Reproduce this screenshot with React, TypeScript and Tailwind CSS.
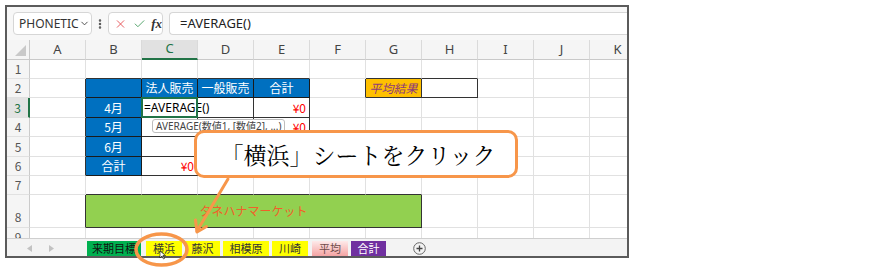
import type { ReactNode } from "react";
import { Check, ChevronDown, EllipsisVertical, X } from "lucide-react";
import { twMerge } from "tailwind-merge";

const jp = "font-['Noto_Sans_CJK_JP',sans-serif]";
const ui = "font-['Noto_Sans','Noto_Sans_CJK_JP',sans-serif]";

const blue = "justify-center bg-[#0070c0] text-white border-r-[#1b1b1b] border-b-[#1b1b1b]";
const boxed = "border-r-[#333] border-b-[#333]";
const redNum = "justify-end pr-[3px] text-[#ff0000]";

function Cell({ className, children }: { className?: string; children?: ReactNode }) {
  return (
    <div
      className={twMerge(
        "flex w-[56px] shrink-0 items-center whitespace-nowrap border-r border-b border-r-[#e1e1e1] border-b-[#e1e1e1] text-[12px] leading-none text-black",
        className
      )}
    >
      {children}
    </div>
  );
}

function RowHead({ n, active, className }: { n: number; active?: boolean; className?: string }) {
  return (
    <div
      className={twMerge(
        "flex w-[23px] shrink-0 items-center justify-center border-b border-r border-b-[#e1e1e1] border-r-[#cbcbcb] bg-[#f5f5f5] text-[12px] leading-none text-[#555]",
        active && "border-r-2 border-r-[#217346] bg-[#e3e3e3] text-[#217346]",
        className
      )}
    >
      {n}
    </div>
  );
}

function Row({ h, children }: { h: string; children: ReactNode }) {
  return <div className={twMerge("flex shrink-0", h)}>{children}</div>;
}

function Rest({ n }: { n: number }) {
  return (
    <>
      {Array.from({ length: n }, (_, i) => (
        <Cell key={i} />
      ))}
    </>
  );
}

const letters = ["A", "B", "C", "D", "E", "F", "G", "H", "I", "J", "K"];

function FormulaBar() {
  return (
    <div className={`flex h-[33px] shrink-0 items-center bg-[#f7f7f7] pl-[6px] ${ui}`}>
      <div className="flex h-[23px] w-[79px] shrink-0 items-center rounded-[4px] border border-[#d6d6d6] bg-white pl-[5px] pr-[3px] text-[12px] text-[#333]">
        PHONETIC
        <ChevronDown size={11} strokeWidth={2} className="ml-auto shrink-0 text-[#444]" />
      </div>
      <div className="flex w-[16px] shrink-0 justify-center text-[#555]">
        <EllipsisVertical size={12} strokeWidth={3} />
      </div>
      <div className="flex h-[23px] w-[55px] shrink-0 items-center rounded-[4px] border border-[#d6d6d6] bg-white pl-[5px]">
        <X size={14} strokeWidth={1.6} className="text-[#e5484d]" />
        <Check size={14} strokeWidth={1.6} className="ml-[6px] text-[#3f9a5a]" />
        <span className="ml-[5px] font-['Liberation_Serif',serif] text-[13px] italic font-bold text-[#333]">fx</span>
      </div>
      <div className="ml-[6px] flex h-[23px] flex-1 items-center rounded-l-[4px] border border-r-0 border-[#d6d6d6] bg-white pl-[10px] text-[13px] text-[#222]">
        =AVERAGE()
      </div>
    </div>
  );
}

function Sheet() {
  return (
    <div className={`flex flex-1 flex-col overflow-hidden ${jp}`}>
      <Row h="h-[20px]">
        <div className="flex w-[23px] shrink-0 items-end justify-end border-b border-r border-[#c9c9c9] bg-[#f5f5f5] p-[3px]">
          <svg width="11" height="11" viewBox="0 0 11 11">
            <polygon points="11,0 11,11 0,11" fill="#c9c9c9" />
          </svg>
        </div>
        {letters.map((l) => (
          <div
            key={l}
            className={
              l === "C"
                ? `flex w-[56px] shrink-0 items-center justify-center border-b-2 border-r border-b-[#217346] border-r-[#dadada] bg-[#e1e1e1] text-[13px] text-[#217346] ${ui}`
                : `flex w-[56px] shrink-0 items-center justify-center border-b border-r border-b-[#c9c9c9] border-r-[#dadada] bg-[#f5f5f5] text-[13px] text-[#444] ${ui}`
            }
          >
            {l}
          </div>
        ))}
      </Row>

      <Row h="h-[19px]">
        <RowHead n={1} />
        <Cell />
        <Cell className="border-b-[#333]" />
        <Cell className="border-b-[#333]" />
        <Cell className="border-b-[#333]" />
        <Cell className="border-b-[#333]" />
        <Cell />
        <Cell className="border-b-[#333]" />
        <Cell className="border-b-[#333]" />
        <Rest n={3} />
      </Row>

      <Row h="h-[19px]">
        <RowHead n={2} />
        <Cell className="border-r-[#333]" />
        <Cell className={blue} />
        <Cell className={blue}>法人販売</Cell>
        <Cell className={blue}>一般販売</Cell>
        <Cell className={blue}>合計</Cell>
        <Cell className="border-r-[#333]" />
        <Cell className={`${boxed} justify-center bg-[#ffc000] italic text-[#8e3a7a]`}>平均結果</Cell>
        <Cell className={boxed} />
        <Rest n={3} />
      </Row>

      <Row h="h-[20px]">
        <RowHead n={3} active />
        <Cell className="border-r-[#333]" />
        <Cell className={blue}>4月</Cell>
        <Cell className={`${boxed} relative z-10 pl-[2px] ${ui}`}>
          =AVERAGE(
          <span className="inline-block h-[13px] w-px bg-black" />)
          <div className="pointer-events-none absolute -left-px -top-px -right-px -bottom-px border-2 border-[#217346]" />
        </Cell>
        <Cell className={boxed} />
        <Cell className={`${boxed} ${redNum}`}>¥0</Cell>
        <Rest n={6} />
      </Row>

      <Row h="h-[19px]">
        <RowHead n={4} />
        <Cell className="border-r-[#333]" />
        <Cell className={blue}>5月</Cell>
        <Cell className={boxed} />
        <Cell className={boxed} />
        <Cell className={`${boxed} ${redNum}`}>¥0</Cell>
        <Rest n={6} />
      </Row>

      <Row h="h-[20px]">
        <RowHead n={5} />
        <Cell className="border-r-[#333]" />
        <Cell className={blue}>6月</Cell>
        <Cell className={boxed} />
        <Cell className={boxed} />
        <Cell className={boxed} />
        <Rest n={6} />
      </Row>

      <Row h="h-[19px]">
        <RowHead n={6} />
        <Cell className="border-r-[#333]" />
        <Cell className={blue}>合計</Cell>
        <Cell className={`${boxed} ${redNum}`}>¥0</Cell>
        <Cell className={boxed} />
        <Cell className={boxed} />
        <Rest n={6} />
      </Row>

      <Row h="h-[19px]">
        <RowHead n={7} />
        <Cell />
        {Array.from({ length: 6 }, (_, i) => (
          <Cell key={i} className="border-b-[#333]" />
        ))}
        <Rest n={4} />
      </Row>

      <Row h="h-[33px]">
        <RowHead n={8} className="items-end pb-[4px]" />
        <Cell className="border-r-[#333]" />
        <Cell className="w-[336px] justify-center border-r-[#333] border-b-[#333] bg-[#92d050] text-[#f0602a]">
          タネハナマーケット
        </Cell>
        <Rest n={5} />
      </Row>

      <Row h="h-[19px]">
        <RowHead n={9} className="items-end pb-[3px]" />
        <Rest n={11} />
      </Row>
    </div>
  );
}

function Tab({ className, children }: { className: string; children: ReactNode }) {
  return (
    <div
      className={twMerge(
        `flex h-[15px] shrink-0 items-center justify-center text-[11px] leading-none text-[#333] ${jp}`,
        className
      )}
    >
      {children}
    </div>
  );
}

function TabBar() {
  return (
    <div className="flex h-[18px] shrink-0 items-start border-t border-[#cfcfcf] bg-[#f3f3f3] pt-[2px]">
      <div className="flex w-[80px] shrink-0 items-center pl-[20px] pt-[4px] text-[#c2c2c2]">
        <svg width="5" height="7" viewBox="0 0 5 7">
          <polygon points="5,0 5,7 0,3.5" fill="currentColor" />
        </svg>
        <svg width="5" height="7" viewBox="0 0 5 7" className="ml-[17px]">
          <polygon points="0,0 0,7 5,3.5" fill="currentColor" />
        </svg>
      </div>
      <Tab className="w-[54px] bg-[#00b050] text-[#111]">来期目標</Tab>
      <Tab className="ml-[5px] w-[36px] bg-[#ffff00]">横浜</Tab>
      <Tab className="ml-[3px] w-[35px] bg-[#ffff00]">藤沢</Tab>
      <Tab className="ml-[3px] w-[46px] bg-[#ffff00]">相模原</Tab>
      <Tab className="ml-[3px] w-[36px] bg-[#ffff00]">川崎</Tab>
      <Tab className="ml-[4px] w-[36px] bg-gradient-to-b from-[#fdeaea] to-[#f3a3a3] text-[#6f4b4b]">平均</Tab>
      <Tab className="ml-[3px] w-[35px] bg-[#7030a0] text-white">合計</Tab>
      <div className="ml-[27px] flex h-[15px] items-center">
        <svg width="13" height="13" viewBox="0 0 13 13">
          <circle cx="6.5" cy="6.5" r="5.8" fill="none" stroke="#666" strokeWidth="1" />
          <path d="M6.5 3.5v6M3.5 6.5h6" stroke="#444" strokeWidth="1.3" />
        </svg>
      </div>
    </div>
  );
}

export default function App() {
  return (
    <div className="relative h-[268px] w-[889px] overflow-hidden bg-white">
      <div className="ml-[5px] mt-[5px] flex h-[253px] w-[624px] flex-col overflow-hidden border-2 border-[#5b5b5b] bg-white">
        <FormulaBar />
        <Sheet />
        <TabBar />
      </div>

      {/* function hint under the edited cell */}
      <div
        className={`absolute left-[152px] top-[119px] flex h-[14px] items-center rounded-[3px] border border-[#bdbdbd] bg-white px-[3px] text-[10px] leading-none text-[#444] ${ui}`}
      >
        AVERAGE(数値1, [数値2], ...)
      </div>

      {/* callout */}
      <div className="absolute left-[194px] top-[130px] flex h-[48px] w-[324px] items-center justify-center rounded-[10px] border-[3px] border-[#f7964a] bg-white pl-[4px] font-['Noto_Serif_CJK_JP','Noto_Sans_CJK_JP',serif] text-[23px] leading-none text-black">
        「横浜」シートをクリック
      </div>

      <svg className="pointer-events-none absolute left-0 top-0" width="889" height="268" viewBox="0 0 889 268">
        <line x1="228" y1="179" x2="197" y2="231" stroke="#f7964a" strokeWidth="3" strokeLinecap="round" />
        <polyline
          points="195.5,220 197,232 206.5,226.5"
          fill="none"
          stroke="#f7964a"
          strokeWidth="3"
          strokeLinecap="round"
          strokeLinejoin="round"
        />
        <ellipse cx="161.5" cy="249.5" rx="25.5" ry="15.5" fill="none" stroke="#f7964a" strokeWidth="3.5" />
        <polygon points="160,251 160,258 162,256 163.5,259 164.5,258.5 163,255.5 165.5,255.5" fill="#fff" stroke="#000" strokeWidth="0.6" />
      </svg>
    </div>
  );
}
